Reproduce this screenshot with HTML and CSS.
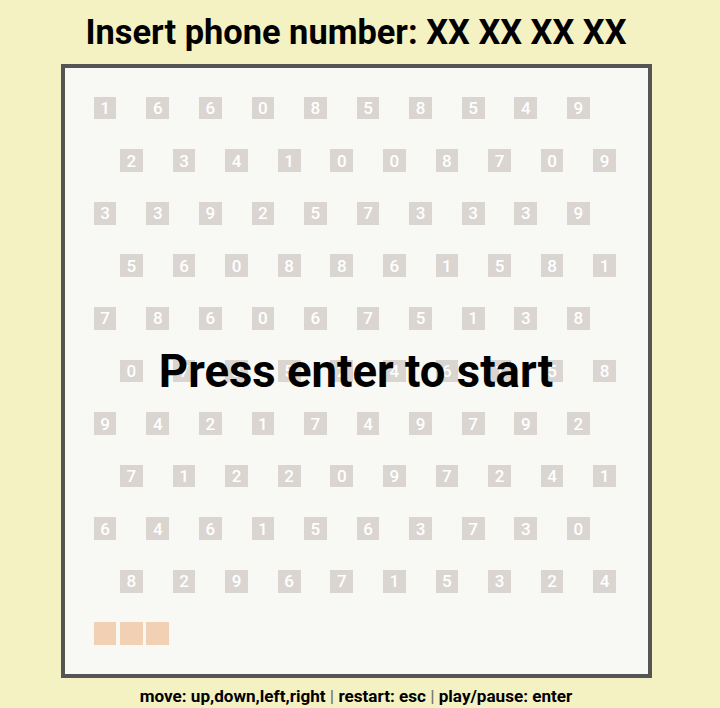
FILE: index.html
```html
<!DOCTYPE html>
<html>
<head>
<meta charset="utf-8">
<link rel="stylesheet" href="styles.css">
</head>
<body>
<div class="page">
  <h1 class="title">Insert phone number: XX XX XX XX</h1>
  <div class="board">
    <div class="grid">
      <div class="row"><span class="cell">1</span><span class="cell">6</span><span class="cell">6</span><span class="cell">0</span><span class="cell">8</span><span class="cell">5</span><span class="cell">8</span><span class="cell">5</span><span class="cell">4</span><span class="cell">9</span></div>
      <div class="row odd"><span class="cell">2</span><span class="cell">3</span><span class="cell">4</span><span class="cell">1</span><span class="cell">0</span><span class="cell">0</span><span class="cell">8</span><span class="cell">7</span><span class="cell">0</span><span class="cell">9</span></div>
      <div class="row"><span class="cell">3</span><span class="cell">3</span><span class="cell">9</span><span class="cell">2</span><span class="cell">5</span><span class="cell">7</span><span class="cell">3</span><span class="cell">3</span><span class="cell">3</span><span class="cell">9</span></div>
      <div class="row odd"><span class="cell">5</span><span class="cell">6</span><span class="cell">0</span><span class="cell">8</span><span class="cell">8</span><span class="cell">6</span><span class="cell">1</span><span class="cell">5</span><span class="cell">8</span><span class="cell">1</span></div>
      <div class="row"><span class="cell">7</span><span class="cell">8</span><span class="cell">6</span><span class="cell">0</span><span class="cell">6</span><span class="cell">7</span><span class="cell">5</span><span class="cell">1</span><span class="cell">3</span><span class="cell">8</span></div>
      <div class="row odd"><span class="cell">0</span><span class="cell">7</span><span class="cell">3</span><span class="cell">5</span><span class="cell">2</span><span class="cell">4</span><span class="cell">6</span><span class="cell">1</span><span class="cell">5</span><span class="cell">8</span></div>
      <div class="row"><span class="cell">9</span><span class="cell">4</span><span class="cell">2</span><span class="cell">1</span><span class="cell">7</span><span class="cell">4</span><span class="cell">9</span><span class="cell">7</span><span class="cell">9</span><span class="cell">2</span></div>
      <div class="row odd"><span class="cell">7</span><span class="cell">1</span><span class="cell">2</span><span class="cell">2</span><span class="cell">0</span><span class="cell">9</span><span class="cell">7</span><span class="cell">2</span><span class="cell">4</span><span class="cell">1</span></div>
      <div class="row"><span class="cell">6</span><span class="cell">4</span><span class="cell">6</span><span class="cell">1</span><span class="cell">5</span><span class="cell">6</span><span class="cell">3</span><span class="cell">7</span><span class="cell">3</span><span class="cell">0</span></div>
      <div class="row odd"><span class="cell">8</span><span class="cell">2</span><span class="cell">9</span><span class="cell">6</span><span class="cell">7</span><span class="cell">1</span><span class="cell">5</span><span class="cell">3</span><span class="cell">2</span><span class="cell">4</span></div>
      <div class="snake"><span class="seg"></span><span class="seg"></span><span class="seg"></span></div>
    </div>
    <div class="overlay">Press enter to start</div>
  </div>
  <p class="help">move: up,down,left,right <span class="sep">|</span> restart: esc <span class="sep">|</span> play/pause: enter</p>
</div>
</body>
</html>
```
FILE: styles.css
```css
html, body {
  margin: 0;
  padding: 0;
  background: #f4f1c2;
  font-family: Roboto, "Liberation Sans", sans-serif;
  color: #000;
}
.page {
  width: 712px;
  display: flex;
  flex-direction: column;
  align-items: center;
}
.title {
  margin: 0;
  height: 64px;
  font-size: 34.4px;
  line-height: 64px;
  font-weight: 700;
  white-space: nowrap;
}
.board {
  position: relative;
  width: 583px;
  box-sizing: content-box;
  border: 4px solid #555555;
  background: #f8f8f4;
  padding: 28.7px 0 29.3px 0;
}
.grid {
  display: flex;
  flex-direction: column;
  gap: 29.9px;
  padding-left: 29.3px;
}
.row {
  display: flex;
  gap: 29.9px;
  height: 22.7px;
}
.row.odd {
  padding-left: 26.3px;
}
.cell {
  width: 22.7px;
  height: 22.7px;
  background: #dad5d1;
  color: #ffffff;
  font-size: 17px;
  font-weight: 500;
  display: flex;
  align-items: center;
  justify-content: center;
}
.snake {
  display: flex;
  gap: 3.6px;
  height: 22.7px;
}
.seg {
  width: 22.7px;
  height: 22.7px;
  background: #f2d0b4;
}
.overlay {
  position: absolute;
  inset: 0;
  display: flex;
  align-items: center;
  justify-content: center;
  font-size: 45.5px;
  font-weight: 700;
  color: #000;
  white-space: nowrap;
}
.help {
  margin: 0;
  height: 36px;
  line-height: 36px;
  font-size: 17.1px;
  font-weight: 700;
  white-space: nowrap;
}
.sep {
  color: #777777;
}
```
